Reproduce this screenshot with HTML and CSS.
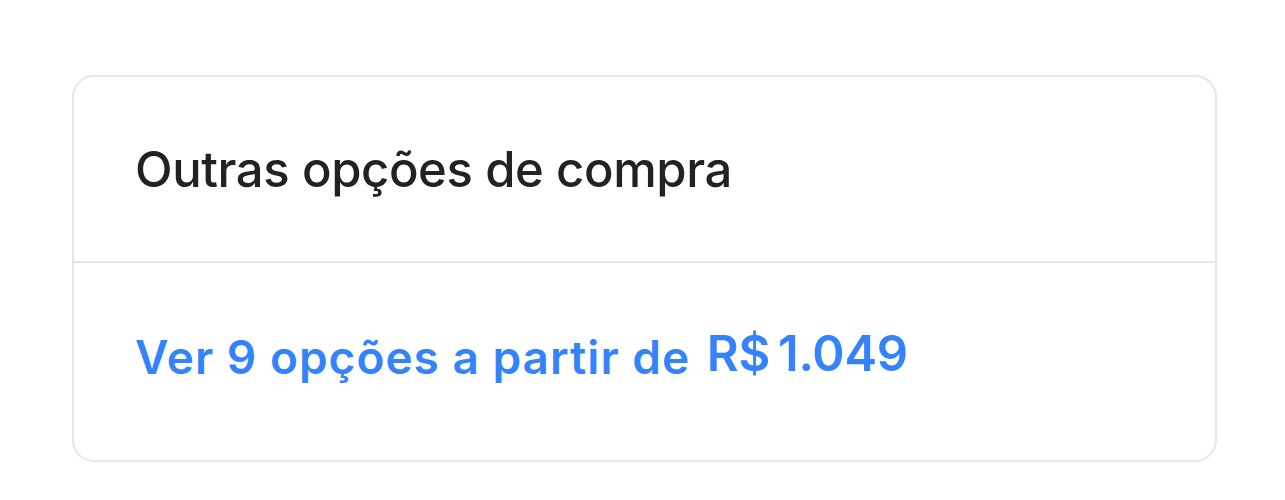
FILE: index.html
```html
<!DOCTYPE html>
<html lang="pt-BR">
<head>
	<meta charset="UTF-8">
	<title>Outras opções de compra</title>
	<link rel="stylesheet" href="styles.css">
</head>
<body>
	<div class="page">
		<div class="box">
			<div class="box-head">
				<h2>Outras opções de compra</h2>
			</div>
			<div class="box-body">
				<a href="#" class="more-link">Ver 9 opções a partir de <span class="price"><span class="currency">R$</span>1.049</span></a>
			</div>
		</div>
	</div>
</body>
</html>
```

FILE: styles.css
```css
*{
	margin:0;
	padding:0;
	box-sizing:border-box;
}
body{
	background:#fff;
	font-family:Inter,"Open Sans",Arial,sans-serif;
}
.page{
	padding:75px 68px 0 72px;
}
.box{
	width:1145px;
	border:2px solid #e6e6e6;
	border-radius:22px;
}
.box-head{
	height:186px;
	padding:0 61px;
	display:flex;
	align-items:center;
	border-bottom:2px solid #e6e6e6;
}
.box-head h2{
	font-size:49px;
	font-weight:500;
	color:#222;
	letter-spacing:-0.4px;
}
.box-body{
	height:197px;
	padding:0 61px 10px;
	display:flex;
	align-items:center;
}
.more-link{
	font-size:46px;
	font-weight:600;
	color:#3483fa;
	text-decoration:none;
	letter-spacing:1px;
}
.price{
	position:relative;
	top:-3px;
	font-size:49px;
	letter-spacing:-0.3px;
	margin-left:4px;
}
.currency{
	margin-right:8px;
}
```
